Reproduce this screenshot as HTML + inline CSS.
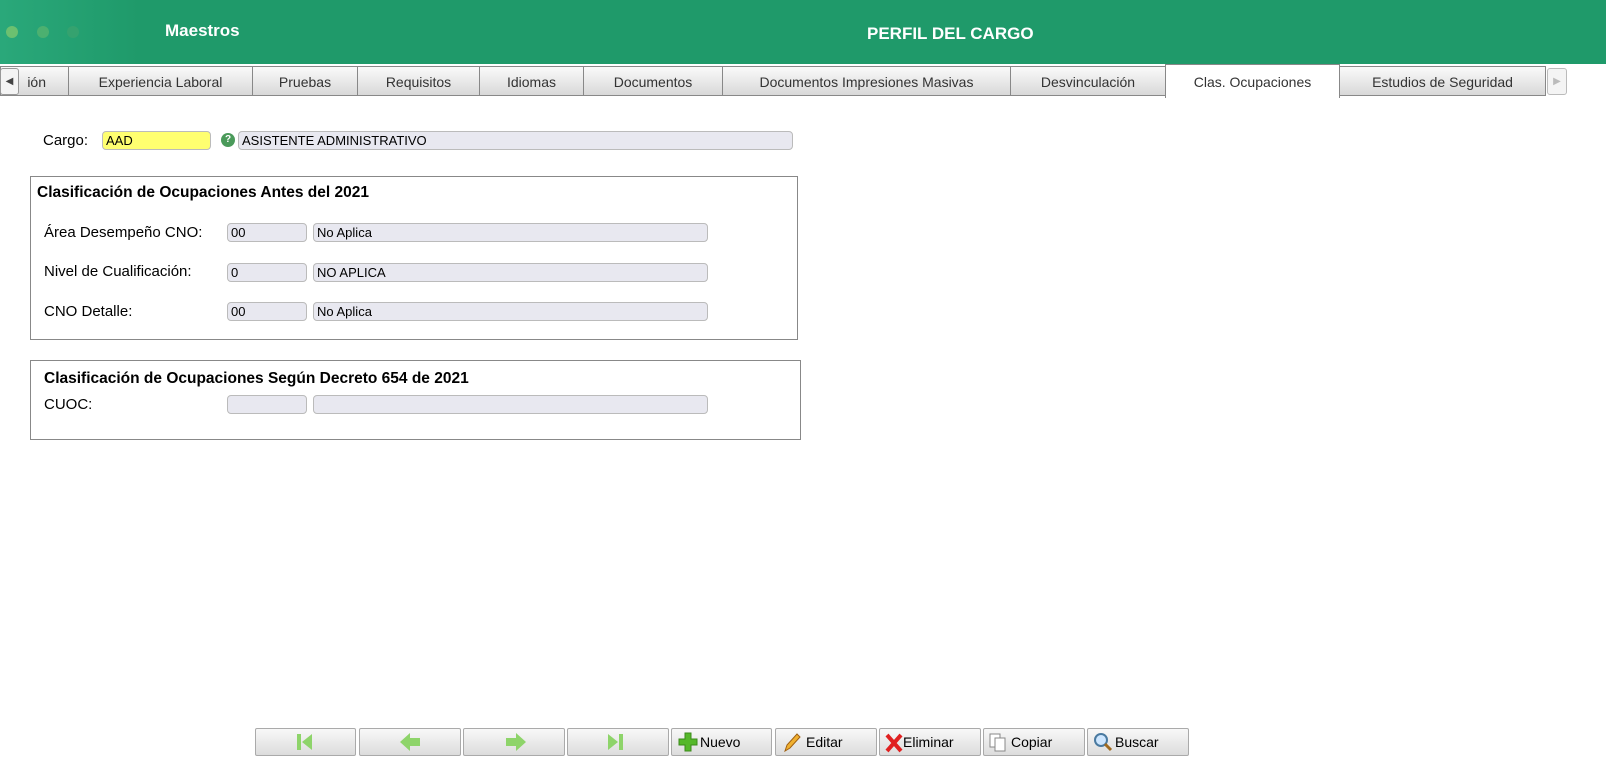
<!DOCTYPE html>
<html><head><meta charset="utf-8"><style>
body{margin:0;width:1606px;height:780px;background:#fff;font-family:"Liberation Sans",sans-serif;position:relative;overflow:hidden}
.a{position:absolute}
.hdr{left:0;top:0;width:1606px;height:64px;background:#1f9a6a}
.tab{position:absolute;top:66px;height:30px;border:1px solid #888;box-sizing:border-box;background:linear-gradient(#fafafa,#e6e6e6 60%,#d8d8d8);font-size:14px;color:#333;text-align:center;line-height:30px}
.inp{position:absolute;height:18px;box-sizing:border-box;border:1px solid #bbb;border-radius:4px;background:#e8e8f0;font-size:13px;line-height:17px;padding-left:3px;color:#000}
.lbl{position:absolute;font-size:15px;color:#000}
.box{position:absolute;border:1px solid #888;box-sizing:border-box}
.btn{position:absolute;top:728px;height:28px;box-sizing:border-box;border:1px solid #aaa;border-radius:2px;background:linear-gradient(#f8f8f8,#dcdcdc);font-size:14px;line-height:26px;color:#000}
</style></head><body>
<div class="a hdr"></div>
<div class="a" style="left:0;top:0;width:140px;height:64px;background:linear-gradient(90deg,#2aa87a,#1f9a6a)"></div>
<div class="a" style="left:6px;top:26px;width:12px;height:12px;border-radius:6px;background:#6cc070"></div>
<div class="a" style="left:37px;top:26px;width:12px;height:12px;border-radius:6px;background:#4cb070"></div>
<div class="a" style="left:67px;top:26px;width:12px;height:12px;border-radius:6px;background:#35a26f"></div>
<div class="a" style="left:165px;top:21px;color:#fff;font-weight:bold;font-size:17px">Maestros</div>
<div class="a" style="left:867px;top:24px;color:#fff;font-weight:bold;font-size:17px">PERFIL DEL CARGO</div>
<div class="tab" style="left:0;width:69px;text-align:right;padding-right:22px">ión</div>
<div class="a" style="left:0;top:68px;width:19px;height:27px;border:1px solid #999;border-radius:3px;background:#f4f4f4;box-sizing:border-box;font-size:10px;line-height:25px;text-align:center;color:#444">◀</div>
<div class="tab" style="left:68px;width:185px">Experiencia Laboral</div>
<div class="tab" style="left:252px;width:106px">Pruebas</div>
<div class="tab" style="left:357px;width:123px">Requisitos</div>
<div class="tab" style="left:479px;width:105px">Idiomas</div>
<div class="tab" style="left:583px;width:140px">Documentos</div>
<div class="tab" style="left:722px;width:289px">Documentos Impresiones Masivas</div>
<div class="tab" style="left:1010px;width:156px">Desvinculación</div>
<div class="tab" style="left:1165px;top:64px;height:34px;width:175px;background:#fff;border-bottom:none;line-height:34px">Clas. Ocupaciones</div>
<div class="tab" style="left:1339px;width:207px">Estudios de Seguridad</div>
<div class="a" style="left:1547px;top:68px;width:20px;height:27px;border:1px solid #bbb;border-radius:3px;background:#f4f4f4;box-sizing:border-box;font-size:10px;line-height:25px;text-align:center;color:#bbb">▶</div>

<div class="lbl" style="left:43px;top:132px">Cargo:</div>
<div class="inp" style="left:102px;top:131px;width:109px;height:19px;background:#ffff70">AAD</div>
<div class="a" style="left:221px;top:133px;width:14px;height:14px;border-radius:7px;background:#4a9a5a;color:#fff;font-size:10px;font-weight:bold;text-align:center;line-height:14px">?</div>
<div class="inp" style="left:238px;top:131px;width:555px;height:19px">ASISTENTE ADMINISTRATIVO</div>

<div class="box" style="left:30px;top:176px;width:768px;height:164px"></div>
<div class="lbl" style="left:37px;top:184px;font-weight:bold;font-size:15.5px">Clasificación de Ocupaciones Antes del 2021</div>
<div class="lbl" style="left:44px;top:224px">Área Desempeño CNO:</div>
<div class="inp" style="left:227px;top:223px;width:80px;height:19px">00</div>
<div class="inp" style="left:313px;top:223px;width:395px;height:19px">No Aplica</div>
<div class="lbl" style="left:44px;top:263px">Nivel de Cualificación:</div>
<div class="inp" style="left:227px;top:263px;width:80px;height:19px">0</div>
<div class="inp" style="left:313px;top:263px;width:395px;height:19px">NO APLICA</div>
<div class="lbl" style="left:44px;top:303px">CNO Detalle:</div>
<div class="inp" style="left:227px;top:302px;width:80px;height:19px">00</div>
<div class="inp" style="left:313px;top:302px;width:395px;height:19px">No Aplica</div>

<div class="box" style="left:30px;top:360px;width:771px;height:80px"></div>
<div class="lbl" style="left:44px;top:370px;font-weight:bold;font-size:15.5px">Clasificación de Ocupaciones Según Decreto 654 de 2021</div>
<div class="lbl" style="left:44px;top:396px">CUOC:</div>
<div class="inp" style="left:227px;top:395px;width:80px;height:19px"></div>
<div class="inp" style="left:313px;top:395px;width:395px;height:19px"></div>

<div class="btn" style="left:255px;width:101px"><svg width="99" height="26"><rect x="41" y="5" width="4" height="16" fill="#8ed46a"/><path d="M46 13 L56 5 V21Z" fill="#8ed46a"/></svg></div>
<div class="btn" style="left:359px;width:102px"><svg width="100" height="26"><path d="M40 13 L50 4 V9 H60 V17 H50 V22Z" fill="#8ed46a"/></svg></div>
<div class="btn" style="left:463px;width:102px"><svg width="100" height="26"><path d="M62 13 L52 4 V9 H42 V17 H52 V22Z" fill="#8ed46a"/></svg></div>
<div class="btn" style="left:567px;width:102px"><svg width="100" height="26"><path d="M40 5 L50 13 L40 21Z" fill="#8ed46a"/><rect x="51" y="5" width="4" height="16" fill="#8ed46a"/></svg></div>
<div class="btn" style="left:671px;width:101px"><svg class="a" style="left:6px;top:3px" width="20" height="20"><path d="M7 1h6v6h6v6h-6v6H7v-6H1V7h6z" fill="#55b82a" stroke="#3a8a1a"/></svg><span class="a" style="left:28px">Nuevo</span></div>
<div class="btn" style="left:775px;width:102px"><svg class="a" style="left:6px;top:3px" width="20" height="20"><path d="M3 19 L5 13 L15 2 L18 5 L8 16Z" fill="#f0b030" stroke="#a06010"/></svg><span class="a" style="left:30px">Editar</span></div>
<div class="btn" style="left:879px;width:102px"><svg class="a" style="left:4px;top:4px" width="20" height="20"><path d="M3 2 L17 18 M17 2 L3 18" stroke="#e02020" stroke-width="4"/></svg><span class="a" style="left:23px">Eliminar</span></div>
<div class="btn" style="left:983px;width:102px"><svg class="a" style="left:4px;top:3px" width="20" height="20"><rect x="2" y="2" width="10" height="13" fill="#fff" stroke="#888"/><rect x="7" y="6" width="10" height="13" fill="#fff" stroke="#888"/></svg><span class="a" style="left:27px">Copiar</span></div>
<div class="btn" style="left:1087px;width:102px"><svg class="a" style="left:5px;top:3px" width="20" height="20"><circle cx="8" cy="8" r="6" fill="#cde6ff" stroke="#4a7aa0" stroke-width="2"/><path d="M12 12 L18 18" stroke="#a06a20" stroke-width="3"/></svg><span class="a" style="left:27px">Buscar</span></div>
</body></html>
